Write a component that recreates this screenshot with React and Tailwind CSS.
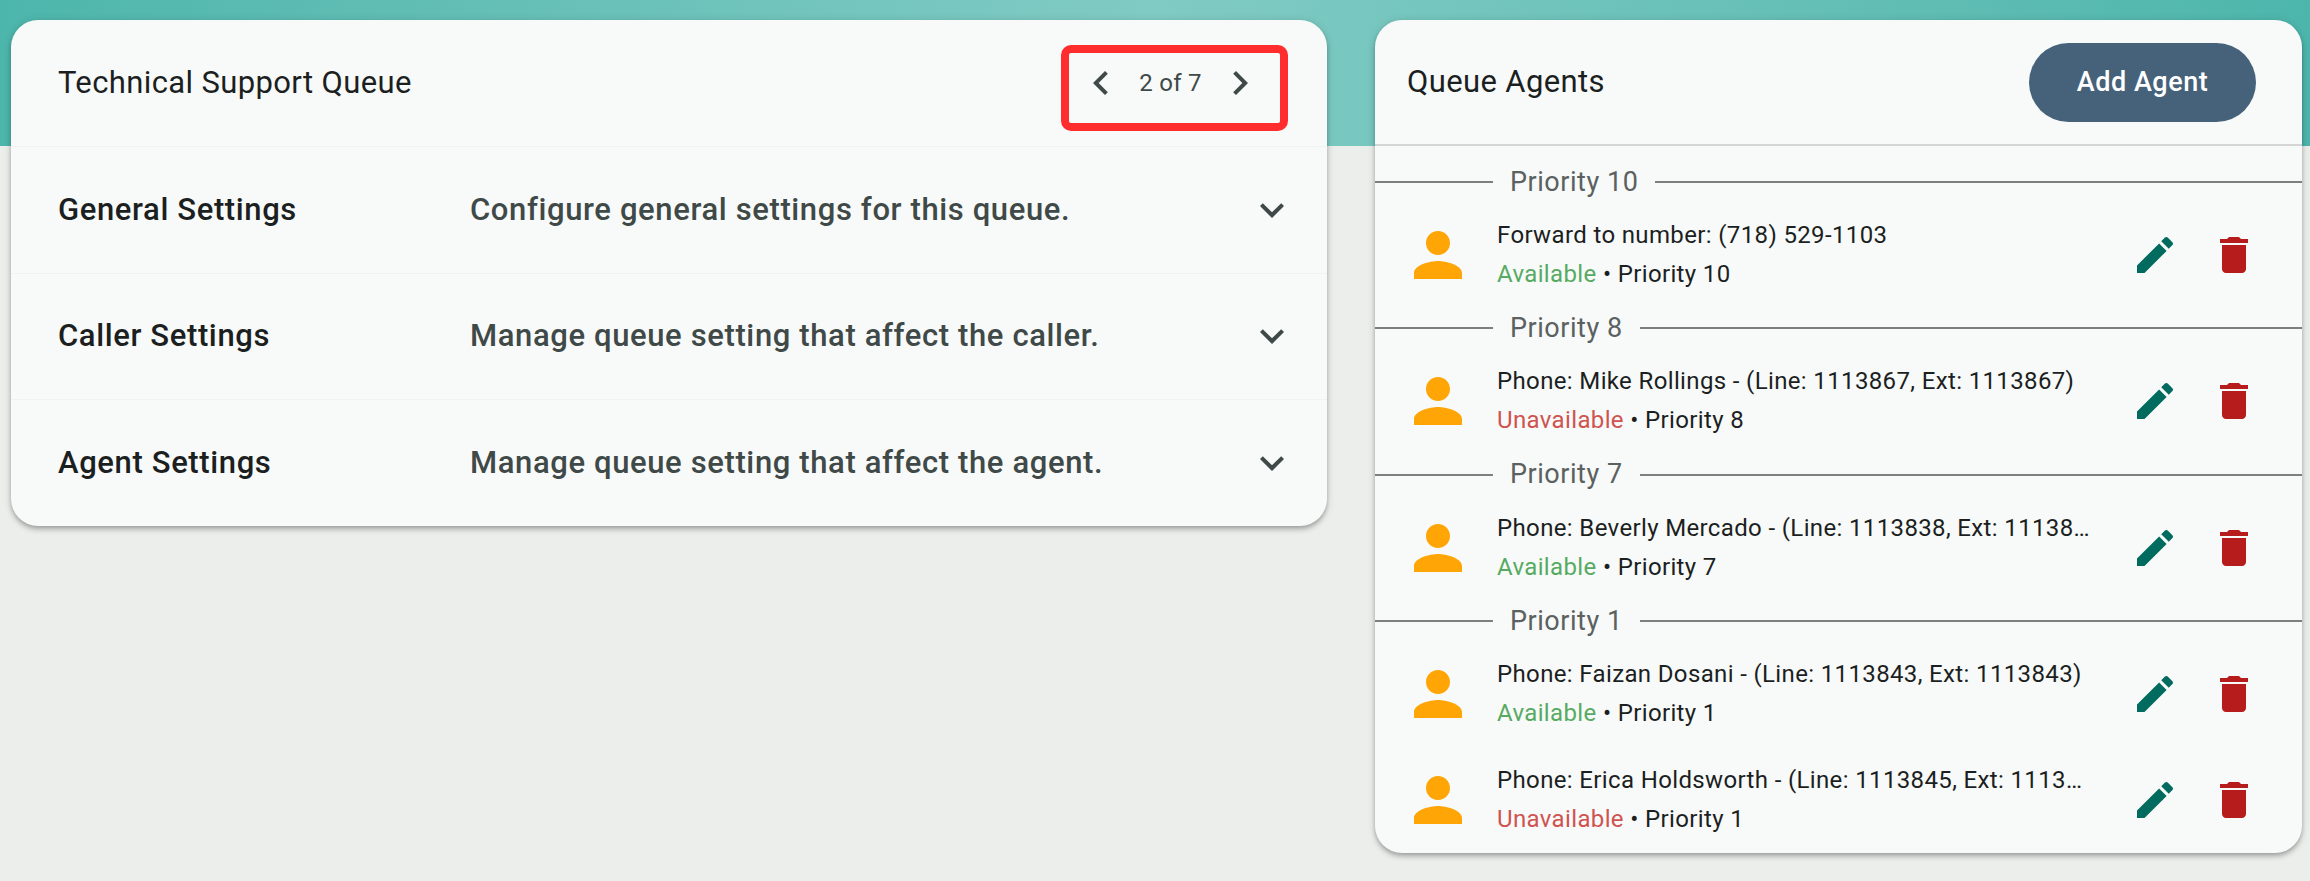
import React from 'react';

const agents = [
  { group: 'Priority 10', rows: [{ name: 'Forward to number: (718) 529-1103', available: true, priority: 'Priority 10' }] },
  { group: 'Priority 8', rows: [{ name: 'Phone: Mike Rollings - (Line: 1113867, Ext: 1113867)', available: false, priority: 'Priority 8' }] },
  { group: 'Priority 7', rows: [{ name: 'Phone: Beverly Mercado - (Line: 1113838, Ext: 1113838)', available: true, priority: 'Priority 7' }] },
  {
    group: 'Priority 1',
    rows: [
      { name: 'Phone: Faizan Dosani - (Line: 1113843, Ext: 1113843)', available: true, priority: 'Priority 1' },
      { name: 'Phone: Erica Holdsworth - (Line: 1113845, Ext: 1113845)', available: false, priority: 'Priority 1' },
    ],
  },
];

const settings = [
  { title: 'General Settings', text: 'Configure general settings for this queue.' },
  { title: 'Caller Settings', text: 'Manage queue setting that affect the caller.' },
  { title: 'Agent Settings', text: 'Manage queue setting that affect the agent.' },
];

const cardClass =
  'bg-[#f8faf9] rounded-[27px] overflow-hidden shadow-[0_2px_4px_-1px_rgba(0,0,0,0.2),0_4px_5px_0_rgba(0,0,0,0.14),0_1px_10px_0_rgba(0,0,0,0.12)]';

function Icon({ d, className }) {
  return (
    <svg viewBox="0 0 24 24" fill="currentColor" className={className}>
      <path d={d} />
    </svg>
  );
}

const icons = {
  left: 'M15.41 7.41L14 6l-6 6 6 6 1.41-1.41L10.83 12z',
  right: 'M10 6L8.59 7.41 13.17 12l-4.58 4.59L10 18l6-6z',
  expand: 'M16.59 8.59L12 13.17 7.41 8.59 6 10l6 6 6-6z',
  person: 'M12 12c2.21 0 4-1.79 4-4s-1.79-4-4-4-4 1.79-4 4 1.79 4 4 4zm0 2c-2.67 0-8 1.34-8 4v2h16v-2c0-2.66-5.33-4-8-4z',
  edit: 'M3 17.25V21h3.75L17.81 9.94l-3.75-3.75L3 17.25zM20.71 7.04c.39-.39.39-1.02 0-1.41l-2.34-2.34c-.39-.39-1.02-.39-1.41 0l-1.83 1.83 3.75 3.75 1.83-1.83z',
  trash: 'M6 19c0 1.1.9 2 2 2h8c1.1 0 2-.9 2-2V7H6v12zM19 4h-3.5l-1-1h-5l-1 1H5v2h14V4z',
};

function SettingRow({ title, text }) {
  return (
    <div className="h-[126.67px] flex items-center pl-[47px] pr-[31px] border-t border-[#f1f3f2]">
      <div className="w-[412px] text-[31px] font-medium tracking-[0.02em] text-[#1c1f1f]">{title}</div>
      <div className="flex-1 text-[31px] font-medium tracking-[0.02em] text-[#3f4948]">{text}</div>
      <Icon d={icons.expand} className="w-12 h-12 text-[#3f4948]" />
    </div>
  );
}

function AgentRow({ name, available, priority }) {
  return (
    <div className="h-[106.3px] flex items-center pl-[27px] pr-[44px]">
      <Icon d={icons.person} className="w-[72px] h-[72px] shrink-0 text-[#ffa506]" />
      <div className="w-[596px] ml-[23px] min-w-0 text-[24px] tracking-[0.015em] leading-[39px]">
        <div className="truncate text-[#1c1f1f]">{name}</div>
        <div className="text-[#1c1f1f]">
          <span className={available ? 'text-[#57aa62]' : 'text-[#cf5350]'}>{available ? 'Available' : 'Unavailable'}</span>
          {' • '}
          {priority}
        </div>
      </div>
      <div className="ml-auto flex gap-[31px]">
        <Icon d={icons.edit} className="w-12 h-12 text-[#006b5e]" />
        <Icon d={icons.trash} className="w-12 h-12 text-[#b71c1c]" />
      </div>
    </div>
  );
}

export default function App() {
  return (
    <div className="min-h-[881px] bg-[#eceeec] font-['Roboto',sans-serif]">
      <div className="h-[146px] bg-gradient-to-r from-[#4db6ac] via-[#80cbc4] to-[#4db6ac]" />
      <div className="-mt-[126px] flex items-start pl-[11px] pr-2 gap-[48px]">
        <section className={`${cardClass} w-[1316px]`}>
          <div className="h-[126px] flex items-center justify-between pl-[47px] pr-[39px]">
            <h1 className="text-[31px] tracking-[0.012em] text-[#1c1f1f]">Technical Support Queue</h1>
            <div className="w-[227px] h-[86px] mt-[10px] flex items-center justify-between pl-2 pr-4 pb-[10px] border-8 border-[#ff2d2d] rounded-[10px] text-[#3f4948]">
              <Icon d={icons.left} className="w-12 h-12" />
              <span className="text-[24px] tracking-[0.01em]">2 of 7</span>
              <Icon d={icons.right} className="w-12 h-12" />
            </div>
          </div>
          {settings.map((s) => (
            <SettingRow key={s.title} {...s} />
          ))}
        </section>

        <section className={`${cardClass} flex-1 min-w-0`}>
          <div className="h-[126px] flex items-center justify-between pl-8 pr-[46px] border-b-2 border-[#d4d6d5]">
            <h2 className="text-[31px] tracking-[0.012em] text-[#1c1f1f]">Queue Agents</h2>
            <button className="w-[227px] h-[79px] rounded-full bg-[#46627a] text-white text-[27px] font-medium tracking-[0.02em]">
              Add Agent
            </button>
          </div>
          <div className="pt-4">
            {agents.map((a) => (
              <div key={a.group}>
                <div className="h-10 flex items-center gap-[17px] text-[27px] tracking-[0.02em] text-[#5a6160]">
                  <div className="w-[118px] h-0.5 bg-[#7b7f7e]" />
                  <span>{a.group}</span>
                  <div className="flex-1 h-0.5 bg-[#7b7f7e]" />
                </div>
                {a.rows.map((r) => (
                  <AgentRow key={r.name} {...r} />
                ))}
              </div>
            ))}
          </div>
        </section>
      </div>
    </div>
  );
}
